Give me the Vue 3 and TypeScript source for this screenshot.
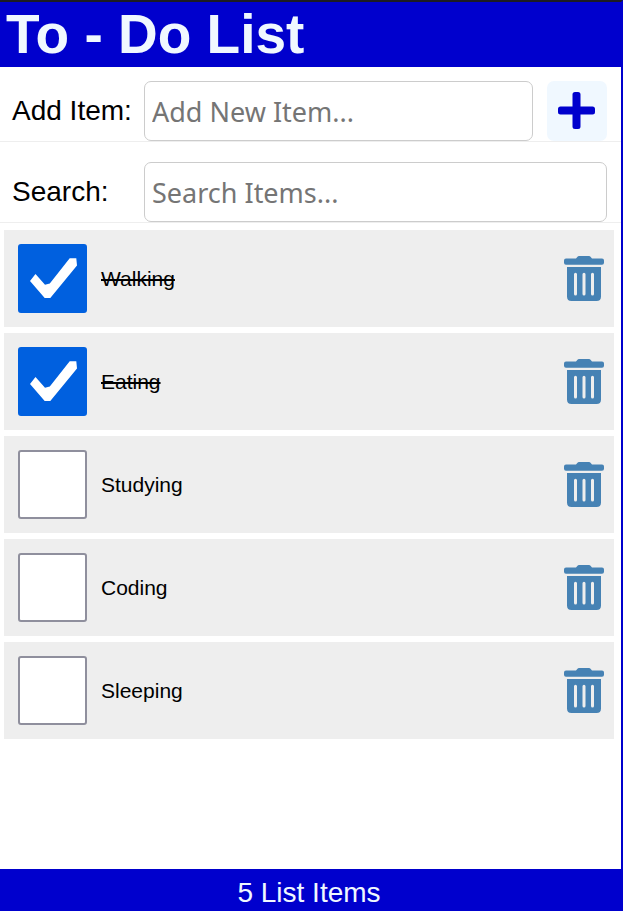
<script setup lang="ts">
import { computed, ref } from 'vue'

interface Item {
  id: number
  label: string
  checked: boolean
}

const items = ref<Item[]>([
  { id: 1, label: 'Walking', checked: true },
  { id: 2, label: 'Eating', checked: true },
  { id: 3, label: 'Studying', checked: false },
  { id: 4, label: 'Coding', checked: false },
  { id: 5, label: 'Sleeping', checked: false },
])
const newItem = ref('')
const search = ref('')

const visibleItems = computed(() =>
  items.value.filter((item) => item.label.toLowerCase().includes(search.value.toLowerCase())),
)

function addItem() {
  const label = newItem.value.trim()
  if (!label) return
  const id = Math.max(0, ...items.value.map((item) => item.id)) + 1
  items.value.push({ id, label, checked: false })
  newItem.value = ''
}

function removeItem(id: number) {
  items.value = items.value.filter((item) => item.id !== id)
}
</script>

<template>
  <div class="app">
    <header class="header">
      <h1>To - Do List</h1>
    </header>

    <form class="row" @submit.prevent="addItem">
      <label for="add-item">Add Item:</label>
      <input id="add-item" v-model="newItem" class="field" type="text" placeholder="Add New Item..." />
      <button class="add" type="submit" aria-label="Add Item">
        <svg viewBox="0 0 37 37" aria-hidden="true">
          <path d="M17 0h3a2.500 2.500 0 0 1 2.500 2.500v12h12a2.500 2.500 0 0 1 2.500 2.500v3a2.500 2.500 0 0 1-2.500 2.500h-12v12a2.500 2.500 0 0 1-2.500 2.500h-3a2.500 2.500 0 0 1-2.500-2.500v-12h-12a2.500 2.500 0 0 1-2.500-2.500v-3a2.500 2.500 0 0 1 2.500-2.500h12v-12a2.500 2.500 0 0 1 2.500-2.500z" />
        </svg>
      </button>
    </form>

    <form class="row" @submit.prevent>
      <label for="search">Search:</label>
      <input id="search" v-model="search" class="field" type="text" placeholder="Search Items..." />
    </form>

    <main class="main">
      <ul class="list">
        <li v-for="item in visibleItems" :key="item.id" class="item">
          <span class="check">
            <input :id="`item-${item.id}`" v-model="item.checked" type="checkbox" />
            <svg v-if="item.checked" viewBox="0 0 69 69" aria-hidden="true">
              <path d="M12 37 17.500 30l9.500 10.800 4.800-1.300L51.700 14.300h6.600l.7 7.200L32.300 54H26.700z" />
            </svg>
          </span>
          <label :for="`item-${item.id}`" :class="{ done: item.checked }">{{ item.label }}</label>
          <button class="remove" type="button" :aria-label="`Delete ${item.label}`" @click="removeItem(item.id)">
            <svg viewBox="0 0 40 45" aria-hidden="true">
              <path d="M2 2.500h10l1.500-1.800Q14 0 15 0h10q1 0 1.500.7L28 2.500h10q2 0 2 2v2.200q0 2-2 2H2q-2 0-2-2V4.500q0-2 2-2z" />
              <path fill-rule="evenodd" d="M3 11h34v29.500q0 4.500-4.500 4.500h-25Q3 45 3 40.500zM10 18.300V38q0 1.500 1.500 1.500T13 38V18.300q0-1.500-1.500-1.500T10 18.300zM18.500 18.300V38q0 1.500 1.500 1.500t1.500-1.500V18.300q0-1.500-1.500-1.500t-1.500 1.500zM27 18.300V38q0 1.500 1.500 1.500T30 38V18.300q0-1.500-1.500-1.500T27 18.300z" />
            </svg>
          </button>
        </li>
      </ul>
    </main>

    <footer class="footer">{{ items.length }} List {{ items.length === 1 ? 'Item' : 'Items' }}</footer>
  </div>
</template>

<style>
body {
  margin: 0;
}
</style>

<style scoped>
* {
  box-sizing: border-box;
}

.app {
  display: flex;
  flex-direction: column;
  min-height: 100vh;
  border-top: 2px solid #1c1b22;
  border-right: 2px solid #0000cd;
  background: #fff;
  color: #000;
  font-family: "Liberation Sans", Arial, sans-serif;
  font-size: 28px;
}

.header {
  padding: 0 6px;
  background: #0000cd;
  color: aliceblue;
}

h1 {
  margin: 0;
  font-size: 55px;
  line-height: 65px;
}

.row {
  display: flex;
  align-items: center;
  padding: 14px 14px 0 12px;
  border-bottom: 1px solid #eee;
}

.row + .row {
  padding-top: 20px;
}

.row label {
  flex: 0 0 132px;
}

.field {
  flex: 1;
  min-width: 0;
  height: 60px;
  padding: 0 7px;
  border: 1px solid #ccc;
  border-radius: 7px;
  background: #fff;
  font-family: "Noto Sans", Tahoma, sans-serif;
  font-size: 27px;
}

.field::placeholder {
  color: #757575;
  opacity: 1;
}

.add {
  display: grid;
  place-items: center;
  width: 60px;
  height: 60px;
  margin-left: 14px;
  padding: 0 1px 1px 0;
  border: 0;
  border-radius: 7px;
  background: aliceblue;
  cursor: pointer;
}

.add svg {
  width: 37px;
  height: 37px;
  fill: #0000cd;
}

.main {
  flex: 1;
  padding: 7px 7px 7px 4px;
}

.list {
  display: flex;
  flex-direction: column;
  gap: 6px;
  margin: 0;
  padding: 0;
  list-style: none;
}

.item {
  display: flex;
  align-items: center;
  gap: 14px;
  padding: 14px 10px 14px 14px;
  background: #eee;
  font-size: 21px;
}

.item label {
  flex: 1;
}

.done {
  text-decoration: line-through;
}

.check {
  display: grid;
}

.check > * {
  grid-area: 1 / 1;
  width: 69px;
  height: 69px;
}

.check input {
  appearance: none;
  margin: 0;
  border: 2px solid #8f8f9d;
  border-radius: 3px;
  background: #fff;
}

.check input:checked {
  border-color: #0060df;
  background: #0060df;
}

.check svg {
  fill: #fff;
  pointer-events: none;
}

.remove {
  display: grid;
  padding: 0;
  border: 0;
  background: none;
  cursor: pointer;
}

.remove svg {
  width: 40px;
  height: 45px;
  fill: steelblue;
}

.footer {
  padding: 8px 3px 2px 0;
  background: #0000cd;
  color: aliceblue;
  line-height: 32px;
  text-align: center;
}
</style>
